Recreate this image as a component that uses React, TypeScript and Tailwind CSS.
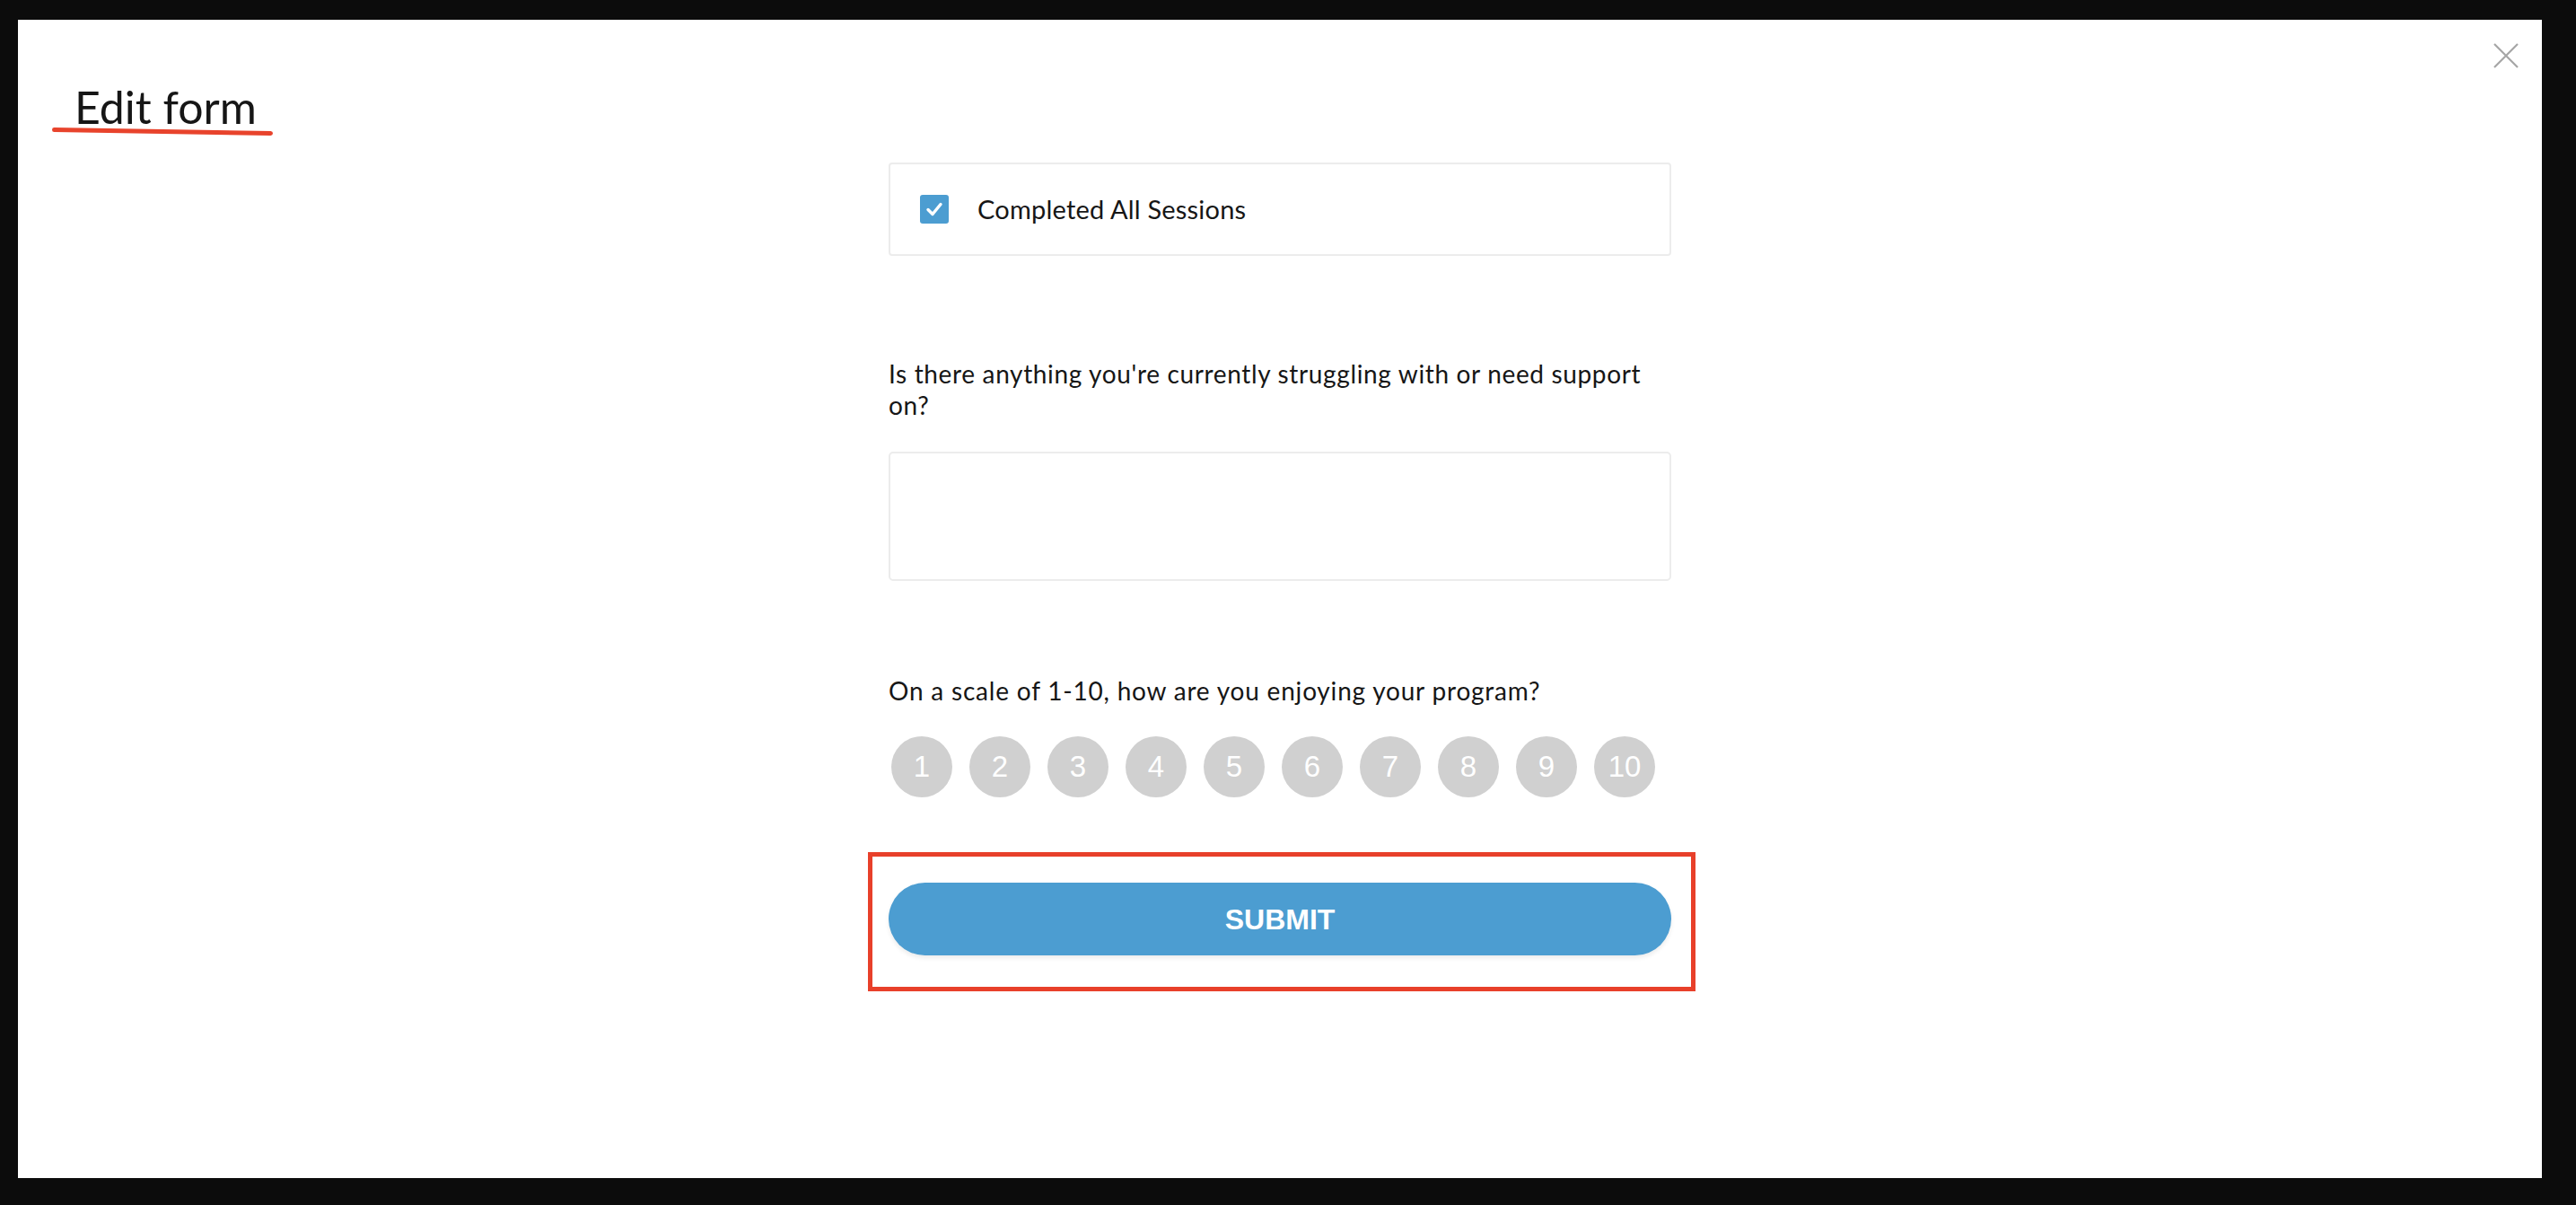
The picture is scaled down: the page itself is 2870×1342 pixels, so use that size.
import React from "react";

export default function App() {
  const nums = [1, 2, 3, 4, 5, 6, 7, 8, 9, 10];
  return (
    <div
      className="w-full h-[1342px] bg-[#0c0c0c] pt-[22px] pl-[20px] pr-[38px] pb-[30px]"
      style={{ fontFamily: "Lato, 'Noto Sans', sans-serif" }}
    >
      <div className="relative w-full h-full bg-white">
        <button className="absolute top-[26px] right-[26px] w-[28px] h-[28px]" aria-label="Close">
          <svg width="28" height="28" viewBox="0 0 28 28">
            <path d="M1 1 L27 27 M27 1 L1 27" stroke="#a6a6a6" strokeWidth="2.2" fill="none" />
          </svg>
        </button>

        <div className="pt-[67px] pl-[38px]">
          <div className="pl-[25px] text-[50px] leading-[60px] text-[#161616]">Edit form</div>
          <div className="mt-[-5px] w-[246px] h-[5px] bg-[#e8432c] rounded-full rotate-[0.9deg]" />
        </div>

        <div className="mx-auto w-[872px] mt-[32px] flex flex-col">
          <div className="h-[104px] border-2 border-[#ececec] rounded-[4px] flex items-center pl-[33px]">
            <div className="w-[32px] h-[32px] rounded-[3px] bg-[#4c9dd1] flex items-center justify-center">
              <svg width="22" height="18" viewBox="0 0 22 18">
                <path d="M4 9.5 L9 14.5 L18 3.5" stroke="white" strokeWidth="3.4" fill="none" strokeLinecap="round" strokeLinejoin="round" />
              </svg>
            </div>
            <span className="ml-[32px] text-[29px] tracking-[0.2px] text-[#161616]">Completed All Sessions</span>
          </div>

          <div className="mt-[114px] text-[28px] leading-[35px] tracking-[0.65px] text-[#161616]">
            Is there anything you're currently struggling with or need support
            <br />
            on?
          </div>

          <div className="mt-[34px] h-[144px] border-2 border-[#ececec] rounded-[5px]" />

          <div className="mt-[105px] text-[28px] leading-[35px] tracking-[0.8px] text-[#161616]">
            On a scale of 1-10, how are you enjoying your program?
          </div>

          <div className="mt-[33px] flex gap-[19px] pl-[3px]">
            {nums.map((n) => (
              <div
                key={n}
                className="w-[68px] h-[68px] rounded-full bg-[#d0d0d0] flex items-center justify-center text-white text-[33px]"
                style={{ fontFamily: "'Liberation Sans', Arial, sans-serif" }}
              >
                {n}
              </div>
            ))}
          </div>

          <div className="mt-[61px] ml-[-23px] mr-[-27px] border-[5px] border-[#e8402a] pt-[29px] pl-[18px] pr-[22px] pb-[35px]">
            <button
              className="w-full h-[81px] rounded-full bg-[#4c9dd1] text-white font-bold text-[32px] shadow-[0_3px_5px_rgba(0,0,0,0.08)]"
              style={{ fontFamily: "'Liberation Sans', Arial, sans-serif" }}
            >
              SUBMIT
            </button>
          </div>
        </div>
      </div>
    </div>
  );
}
